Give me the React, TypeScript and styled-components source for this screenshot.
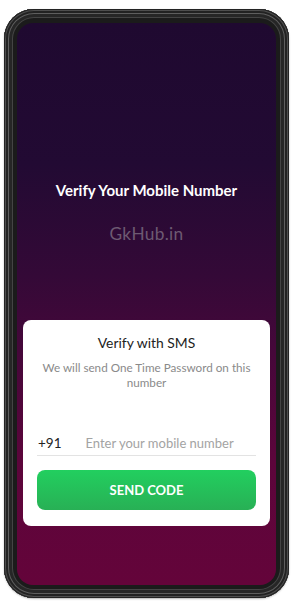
import styled, { createGlobalStyle } from "styled-components";

const GlobalStyle = createGlobalStyle`
  html, body {
    margin: 0;
    padding: 0;
    background: #ffffff;
  }
  body {
    font-family: Lato, "Open Sans", "Liberation Sans", sans-serif;
  }
`;

const Page = styled.div`
  width: 293px;
  height: 608px;
  padding: 9px 4px 10px 4px;
  box-sizing: border-box;
`;

const Phone = styled.div`
  width: 285px;
  height: 589px;
  box-sizing: border-box;
  border-radius: 30px;
  background: #1b1b1b;
  padding: 14px 13px 13px 13px;
  box-shadow:
    inset 0 0 0 1px #232323,
    inset 0 0 0 2px #4e4e4e,
    inset 0 0 0 4px #222222,
    inset 0 0 0 5px #5e5e5e,
    inset 0 0 0 8px #262626,
    inset 0 0 0 9px #444444,
    0 1px 2px rgba(0, 0, 0, 0.3);
`;

const Screen = styled.div`
  height: 100%;
  border-radius: 16px;
  overflow: hidden;
  display: flex;
  flex-direction: column;
  align-items: center;
  padding: 0 6px;
  box-sizing: border-box;
  background: linear-gradient(
    180deg,
    #1f0930 0%,
    #220a33 25%,
    #340937 45%,
    #45073a 58%,
    #5c053b 78%,
    #64043a 100%
  );
`;

const Heading = styled.h1`
  margin: 157px 0 0 0;
  color: #ffffff;
  font-size: 15px;
  font-weight: 700;
  line-height: 20px;
  text-align: center;
`;

const Watermark = styled.div`
  margin-top: 23px;
  color: #6d5a72;
  font-size: 17.3px;
  letter-spacing: 0.3px;
  line-height: 21px;
`;

const Card = styled.div`
  margin-top: 76px;
  width: 100%;
  background: #ffffff;
  border-radius: 8px;
  padding: 14px 14px 16px 14px;
  box-sizing: border-box;
  display: flex;
  flex-direction: column;
  align-items: stretch;
`;

const CardTitle = styled.div`
  color: #222222;
  font-size: 13.9px;
  line-height: 18px;
  text-align: center;
`;

const CardText = styled.p`
  margin: 8px 0 0 0;
  color: #8a8a8a;
  font-size: 11.7px;
  line-height: 15px;
  text-align: center;
`;

const PhoneRow = styled.div`
  margin-top: 44px;
  display: flex;
  align-items: center;
  gap: 24px;
  padding: 0 1px 3px 1px;
  border-bottom: 1px solid #e3e3e3;
`;

const Code = styled.span`
  color: #222222;
  font-size: 13.5px;
  line-height: 18px;
`;

const Input = styled.input`
  flex: 1;
  min-width: 0;
  border: none;
  outline: none;
  padding: 0;
  background: transparent;
  font-family: inherit;
  font-size: 13px;
  line-height: 18px;
  color: #222222;
  &::placeholder {
    color: #a3a3a3;
  }
`;

const SendButton = styled.button`
  margin-top: 14px;
  height: 40px;
  border: none;
  border-radius: 8px;
  background: linear-gradient(180deg, #22cf5f 0%, #28b055 100%);
  color: #ffffff;
  font-family: inherit;
  font-size: 13px;
  font-weight: 700;
  cursor: pointer;
`;

export default function App() {
  return (
    <>
      <GlobalStyle />
      <Page>
        <Phone>
          <Screen>
            <Heading>Verify Your Mobile Number</Heading>
            <Watermark>GkHub.in</Watermark>
            <Card>
              <CardTitle>Verify with SMS</CardTitle>
              <CardText>We will send One Time Password on this number</CardText>
              <PhoneRow>
                <Code>+91</Code>
                <Input placeholder="Enter your mobile number" />
              </PhoneRow>
              <SendButton>SEND CODE</SendButton>
            </Card>
          </Screen>
        </Phone>
      </Page>
    </>
  );
}
